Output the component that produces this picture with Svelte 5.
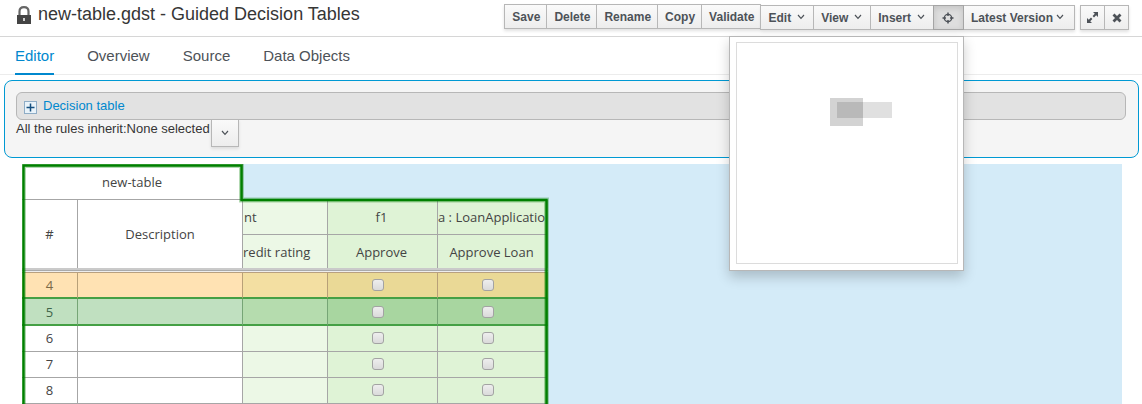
<script>
  const actions = ['Save', 'Delete', 'Rename', 'Copy', 'Validate'];
  const menus = ['Edit', 'View', 'Insert'];
  const tabs = ['Editor', 'Overview', 'Source', 'Data Objects'];
  const rows = [
    { n: 4, state: 'hover' },
    { n: 5, state: 'selected' },
    { n: 6, state: '' },
    { n: 7, state: '' },
    { n: 8, state: '' },
  ];
</script>

{#snippet chevron()}
  <svg class="chevron" viewBox="0 0 8 6" aria-hidden="true"><path d="M1 1l3 3.300L7 1" /></svg>
{/snippet}

<div class="page">
  <header>
    <svg class="lock" viewBox="0 0 14 18" aria-hidden="true">
      <path d="M2.500 9V5.500C2.500 2.600 4.300 1.100 7 1.100s4.500 1.500 4.500 4.400V9" fill="none" stroke="#666" stroke-width="2.200" />
      <path d="M0 9h14v9H0z" fill="#444" />
      <path d="M6 12h2v3H6z" fill="#ccc" />
    </svg>
    <h1>new-table.gdst - Guided Decision Tables</h1>
    <div class="toolbar">
      <div class="group actions">
        {#each actions as a}<button>{a}</button>{/each}
      </div>
      <div class="group menus">
        {#each menus as m}<button>{m}{@render chevron()}</button>{/each}
        <div class="anchor">
          <button class="icon on" aria-label="Navigator">
            <svg width="12" height="12" viewBox="0 0 12 12" aria-hidden="true">
              <circle cx="6" cy="6" r="3.700" fill="none" stroke="#4d5258" stroke-width="1.300" />
              <path d="M6 0.500v3.500M6 8v3.500M0.500 6h3.500M8 6h3.500" stroke="#4d5258" stroke-width="1.500" />
            </svg>
          </button>
          <div class="popup">
            <svg class="map" viewBox="0 0 220 220" aria-hidden="true">
              <path d="M93 55h33v28H93z" fill="#d3d3d3" />
              <path d="M100 59h55v16h-55z" fill="#000" fill-opacity="0.12" />
            </svg>
          </div>
        </div>
        <button class="version">Latest Version{@render chevron()}</button>
      </div>
      <div class="group window">
        <button class="icon" aria-label="Expand">
          <svg width="11" height="11" viewBox="0 0 11 11" fill="#4d5258" aria-hidden="true">
            <path d="M6 0h5v5L9.200 3.200 7 5.400 5.600 4 7.800 1.800zM5 11H0V6l1.800 1.800L4 5.600 5.400 7 3.200 9.200z" />
          </svg>
        </button>
        <button class="icon" aria-label="Close">
          <svg width="10" height="10" viewBox="0 0 10 10" aria-hidden="true">
            <path d="M1.500 1.500l7 7M8.500 1.500l-7 7" stroke="#4d5258" stroke-width="2.800" />
          </svg>
        </button>
      </div>
    </div>
  </header>

  <nav>
    {#each tabs as t, i}<a href="#{i}" class:active={i === 0}>{t}</a>{/each}
  </nav>

  <section class="panel">
    <div class="bar">
      <a href="#columns" class="toggle">
        <svg width="13" height="13" viewBox="0 0 13 13" aria-hidden="true">
          <rect x="0.500" y="0.500" width="12" height="12" fill="#e9f3fa" stroke="#8fadc6" />
          <path d="M2.500 6.500h8M6.500 2.500v8" stroke="#155080" stroke-width="1.500" />
        </svg>
        Decision table
      </a>
    </div>
    <div class="inherit">
      <span>All the rules inherit:None selected</span>
      <button aria-label="Choose parent rule">{@render chevron()}</button>
    </div>
  </section>

  <main>
    <table>
      <colgroup><col class="c1" /><col class="c2" /><col class="c3" /><col class="c4" /><col class="c4" /></colgroup>
      <thead>
        <tr><th colspan="2" class="name">new-table</th><td colspan="3" class="void"></td></tr>
        <tr>
          <th rowspan="2">#</th>
          <th rowspan="2">Description</th>
          <th class="cond cut inset">nt</th>
          <th class="act">f1</th>
          <th class="act cut">a : LoanApplicatio</th>
        </tr>
        <tr>
          <th class="cond cut">redit rating</th>
          <th class="act">Approve</th>
          <th class="act">Approve Loan</th>
        </tr>
        <tr class="divider"><td colspan="5"></td></tr>
      </thead>
      <tbody>
        {#each rows as r}
          <tr class={r.state}>
            <td>{r.n}</td>
            <td></td>
            <td class="cond"></td>
            <td class="act"><input type="checkbox" aria-label="Approve, row {r.n}" /></td>
            <td class="act"><input type="checkbox" aria-label="Approve Loan, row {r.n}" /></td>
          </tr>
        {/each}
      </tbody>
    </table>
    <svg class="outline" aria-hidden="true">
      <path d="M1.500 2000V1.500H219.500V36H524.500V2000" stroke-width="5" stroke-opacity="0.3" />
      <path d="M1.500 2000V1.500H219.500V36H524.500V2000" stroke-width="2.400" />
    </svg>
  </main>
</div>

<style>
  :global(body) {
    background: #fff;
  }
  .page {
    display: flex;
    flex-direction: column;
    height: 100vh;
    overflow: hidden;
    font: 13px/16px "Liberation Sans", Arial, sans-serif;
    color: #363636;
  }
  * {
    box-sizing: border-box;
  }
  header {
    display: flex;
    flex: none;
    height: 37px;
    padding: 4px 13px 0 17px;
    border-bottom: 1px solid #d6d6d6;
  }
  .lock {
    width: 14px;
    height: 18px;
    margin: 2px 7px 0 0;
  }
  h1 {
    margin: 0;
    font-size: 18px;
    line-height: 20px;
    font-weight: 400;
    white-space: nowrap;
  }
  .toolbar {
    display: flex;
    align-items: flex-start;
    margin-left: auto;
  }
  .group {
    display: flex;
    box-shadow: 0 2px 3px rgba(3, 3, 3, 0.12);
  }
  .menus,
  .window {
    margin-top: 1px;
  }
  .window {
    margin-left: 5px;
  }
  button {
    display: flex;
    align-items: center;
    justify-content: center;
    height: 25px;
    margin: 0;
    padding: 0 6px 0 7px;
    border: 1px solid #b7b7b7;
    border-radius: 0;
    background: linear-gradient(#fafafa, #ededed);
    color: #4d5258;
    font: bold 12px/16px "Liberation Sans", Arial, sans-serif;
    white-space: nowrap;
  }
  .group > button + button,
  .menus button {
    margin-left: -1px;
  }
  .menus > button {
    gap: 6px;
    padding: 0 8px 0 7px;
  }
  .menus > .version {
    gap: 3px;
    padding: 0 10px 0 7px;
  }
  .chevron {
    width: 8px;
    height: 6px;
    margin-bottom: 2px;
    fill: none;
    stroke: #4d5258;
    stroke-width: 1.2;
  }
  .icon {
    width: 25px;
    padding: 0;
  }
  .anchor {
    position: relative;
  }
  .on {
    width: 31px;
    background: #dedede;
    border-color: #a5a5a5;
    box-shadow: inset 0 2px 6px rgba(3, 3, 3, 0.12);
  }
  .popup {
    position: absolute;
    z-index: 2;
    top: 31px;
    right: 0;
    padding: 5px 5px 6px 6px;
    border: 1px solid #b7b7b7;
    background: #fff;
    box-shadow: 0 6px 12px rgba(0, 0, 0, 0.2);
  }
  .map {
    display: block;
    width: 222px;
    height: 222px;
    border: 1px solid #dcdcdc;
  }
  nav {
    display: flex;
    flex: none;
    gap: 33px;
    height: 38px;
    padding-left: 15px;
    border-bottom: 1px solid #ececec;
  }
  nav a {
    height: 38px;
    padding-top: 10px;
    color: #4d5258;
    font-size: 15px;
    line-height: 18px;
    text-decoration: none;
  }
  nav .active {
    color: #0088ce;
    border-bottom: 2px solid #0088ce;
  }
  .panel {
    flex: none;
    height: 78px;
    margin: 5px 3px 6px 4px;
    padding: 11px 12px 0 11px;
    border: 1px solid #0099d3;
    border-radius: 8px;
    background: #f5f5f5;
  }
  .bar {
    height: 28px;
    padding: 5px 7px 0;
    border: 1px solid #b7b7b7;
    border-radius: 6px;
    background: #e2e2e2;
  }
  .toggle {
    display: flex;
    gap: 6px;
    color: #0088ce;
    text-decoration: none;
  }
  .toggle svg {
    margin-top: 3px;
  }
  .inherit {
    display: flex;
    gap: 1px;
    line-height: 18px;
  }
  .inherit button {
    width: 28px;
    height: 28px;
    margin-top: -1px;
    padding: 0;
    box-shadow: 0 2px 3px rgba(3, 3, 3, 0.1);
  }
  .inherit .chevron {
    margin-bottom: 0;
  }
  main {
    position: relative;
    flex: 1;
    min-height: 0;
    margin: 0 20px 0 22px;
    overflow: hidden;
    background: #d4ebf8;
  }
  table {
    width: 525px;
    table-layout: fixed;
    border-collapse: separate;
    border-spacing: 0;
    font: 13px/18px "Open Sans", "Noto Sans", sans-serif;
    color: #444;
    text-align: center;
  }
  .c1 {
    width: 56px;
  }
  .c2 {
    width: 165px;
  }
  .c3 {
    width: 85px;
  }
  .c4 {
    width: 110px;
  }
  th,
  td {
    height: 26px;
    padding: 0;
    overflow: hidden;
    background: #fff;
    border: solid #a6a6a6;
    border-width: 0 1px 1px 0;
    font-weight: 400;
    white-space: nowrap;
  }
  thead th {
    height: 35px;
  }
  thead .name {
    height: 36px;
  }
  th[rowspan] {
    border-bottom: 0;
  }
  thead tr:nth-child(3) th {
    height: 33px;
    border-bottom: 0;
  }
  thead .act {
    padding-right: 2px;
  }
  .void {
    border: 0;
    background: none;
  }
  .cut {
    text-align: left;
  }
  .inset {
    padding-left: 1px;
  }
  .divider td {
    height: 5px;
    border-top: 2px solid #cacaca;
    border-bottom: 1px solid #b8a080;
    border-right: 0;
    background: linear-gradient(#aaa 1px, #eee 1px);
  }
  .cond {
    background: #ecf8e6;
  }
  .act {
    background: #dff3d6;
  }
  tbody td {
    padding-bottom: 2px;
  }
  tbody tr:nth-child(2) td {
    height: 27px;
  }
  .hover td,
  .selected td {
    padding-bottom: 0;
  }
  .hover td {
    background: #ffe2b3;
    border-bottom: 2px solid #45a045;
    border-right-color: #b8a078;
    color: #7a6a48;
  }
  .hover .cond {
    background: #f3dfa2;
  }
  .hover .act {
    background: #ead996;
  }
  .selected td {
    background: #c0e0c0;
    border-bottom: 2px solid #45a045;
    border-right-color: #76a576;
    color: #41654a;
  }
  .selected .cond {
    background: #b5dcae;
  }
  .selected .act {
    background: #a8d6a0;
  }
  input {
    display: block;
    appearance: none;
    width: 12px;
    height: 12px;
    margin: 0 auto;
    position: relative;
    left: -5px;
    border: 1px solid #a3a3a3;
    border-radius: 3px;
    background: linear-gradient(#eee, #dadada);
  }
  .outline {
    position: absolute;
    inset: 0;
    width: 100%;
    height: 100%;
    fill: none;
    stroke: #008000;
    pointer-events: none;
  }
</style>
